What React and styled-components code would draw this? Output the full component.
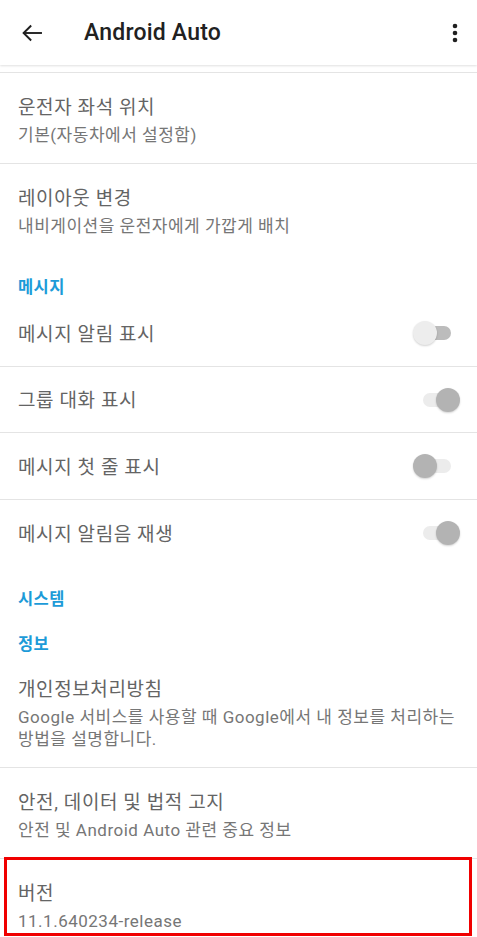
import React from "react";
import styled, { createGlobalStyle } from "styled-components";

const Global = createGlobalStyle`
  html, body { margin: 0; padding: 0; background: #ffffff; }
  body { overflow: hidden; font-family: Roboto, "Noto Sans CJK KR", sans-serif; }
  * { box-sizing: border-box; }
`;

const Page = styled.div`
  width: 477px;
  height: 937px;
  overflow: hidden;
  background: #fff;
  display: flex;
  flex-direction: column;
`;

const Header = styled.header`
  height: 65px;
  flex: none;
  display: flex;
  align-items: center;
  padding: 0 10px 0 20px;
  background: #fff;
  box-shadow: 0 1px 2px rgba(0, 0, 0, 0.12);
  position: relative;
  z-index: 1;
`;

const IconButton = styled.button`
  border: 0;
  background: none;
  padding: 0;
  width: 24px;
  height: 24px;
  display: flex;
  align-items: center;
  justify-content: center;
  color: #202020;
`;

const Title = styled.h1`
  margin: 0 0 0 40px;
  flex: 1;
  font-family: Roboto, "Noto Sans CJK KR", sans-serif;
  font-size: 23px;
  font-weight: 500;
  color: #212121;
  letter-spacing: 0.2px;
  line-height: 1;
`;

const List = styled.div`
  flex: 1;
  display: flex;
  flex-direction: column;
`;

const PartialItem = styled.div`
  height: 8px;
  border-bottom: 1px solid #e4e4e4;
  flex: none;
`;

const Item = styled.div`
  flex: none;
  padding: 23px 14px 17px 18px;
  border-bottom: ${(p) => (p.$divider ? "1px solid #e4e4e4" : "0")};
  position: relative;
`;

const ItemTitle = styled.div`
  font-family: Roboto, "Noto Sans CJK KR", sans-serif;
  font-size: 19px;
  line-height: 24px;
  letter-spacing: 0.6px;
  color: #646464;
`;

const ItemSub = styled.div`
  margin-top: 4px;
  font-family: Roboto, "Noto Sans CJK KR", sans-serif;
  font-size: 17px;
  line-height: 22px;
  letter-spacing: 0.5px;
  color: #767676;
`;

const Category = styled.div`
  flex: none;
  padding: 22px 18px 0;
  height: ${(p) => p.$h}px;
  font-family: Roboto, "Noto Sans CJK KR", sans-serif;
  font-size: 16.5px;
  font-weight: 700;
  line-height: 24px;
  letter-spacing: 0.4px;
  color: #1c9bd8;
`;

const SwitchRow = styled.div`
  flex: none;
  height: ${(p) => p.$h}px;
  display: flex;
  align-items: center;
  justify-content: space-between;
  padding: 3px 16px 0 18px;
  border-bottom: ${(p) => (p.$divider ? "1px solid #e4e4e4" : "0")};
`;

const SwitchBox = styled.div`
  position: relative;
  width: 49px;
  height: 26px;
  flex: none;
  margin-top: -3px;
`;

const Track = styled.div`
  position: absolute;
  left: 11px;
  top: 6px;
  width: 28px;
  height: 14px;
  border-radius: 7px;
  background: ${(p) => p.$color};
`;

const Thumb = styled.div`
  position: absolute;
  top: 1px;
  left: ${(p) => (p.$on ? "24px" : "1px")};
  width: 24px;
  height: 24px;
  border-radius: 50%;
  background: ${(p) => p.$color};
  box-shadow: 0 1px 2px rgba(0, 0, 0, 0.18);
`;

const Highlight = styled.div`
  position: absolute;
  left: 4px;
  right: 5px;
  top: -2px;
  height: 79px;
  border: 3px solid #f00000;
  pointer-events: none;
`;

const Switch = ({ on, light }) => (
  <SwitchBox>
    <Track $color={light ? "#bcbcbc" : "#ececec"} />
    <Thumb $on={on} $color={light ? "#ededed" : "#b3b3b3"} />
  </SwitchBox>
);

const BackIcon = () => (
  <svg width="24" height="24" viewBox="0 0 24 24" fill="none" stroke="#202020" strokeWidth="1.9" strokeLinecap="square">
    <path d="M21 12H4" />
    <path d="M10.5 5.2L3.6 12l6.9 6.8" />
  </svg>
);

const MoreIcon = () => (
  <svg width="24" height="24" viewBox="0 0 24 24" fill="#202020">
    <circle cx="12" cy="5" r="2.3" />
    <circle cx="12" cy="12" r="2.3" />
    <circle cx="12" cy="19" r="2.3" />
  </svg>
);

export default function App() {
  return (
    <>
      <Global />
      <Page>
        <Header>
          <IconButton aria-label="back">
            <BackIcon />
          </IconButton>
          <Title>Android Auto</Title>
          <IconButton aria-label="more">
            <MoreIcon />
          </IconButton>
        </Header>
        <List>
          <PartialItem />
          <Item $divider>
            <ItemTitle>운전자 좌석 위치</ItemTitle>
            <ItemSub>기본(자동차에서 설정함)</ItemSub>
          </Item>
          <Item>
            <ItemTitle>레이아웃 변경</ItemTitle>
            <ItemSub>내비게이션을 운전자에게 가깝게 배치</ItemSub>
          </Item>
          <Category $h={46}>메시지</Category>
          <SwitchRow $divider $h={67}>
            <ItemTitle>메시지 알림 표시</ItemTitle>
            <Switch on={false} light />
          </SwitchRow>
          <SwitchRow $divider $h={66}>
            <ItemTitle>그룹 대화 표시</ItemTitle>
            <Switch on />
          </SwitchRow>
          <SwitchRow $divider $h={67}>
            <ItemTitle>메시지 첫 줄 표시</ItemTitle>
            <Switch on={false} />
          </SwitchRow>
          <SwitchRow $h={66}>
            <ItemTitle>메시지 알림음 재생</ItemTitle>
            <Switch on />
          </SwitchRow>
          <Category $h={45}>시스템</Category>
          <Category $h={44}>정보</Category>
          <Item $divider>
            <ItemTitle>개인정보처리방침</ItemTitle>
            <ItemSub>Google 서비스를 사용할 때 Google에서 내 정보를 처리하는 방법을 설명합니다.</ItemSub>
          </Item>
          <Item $divider>
            <ItemTitle>안전, 데이터 및 법적 고지</ItemTitle>
            <ItemSub>안전 및 Android Auto 관련 중요 정보</ItemSub>
          </Item>
          <Item>
            <ItemTitle>버전</ItemTitle>
            <ItemSub>11.1.640234-release</ItemSub>
            <Highlight />
          </Item>
        </List>
      </Page>
    </>
  );
}
